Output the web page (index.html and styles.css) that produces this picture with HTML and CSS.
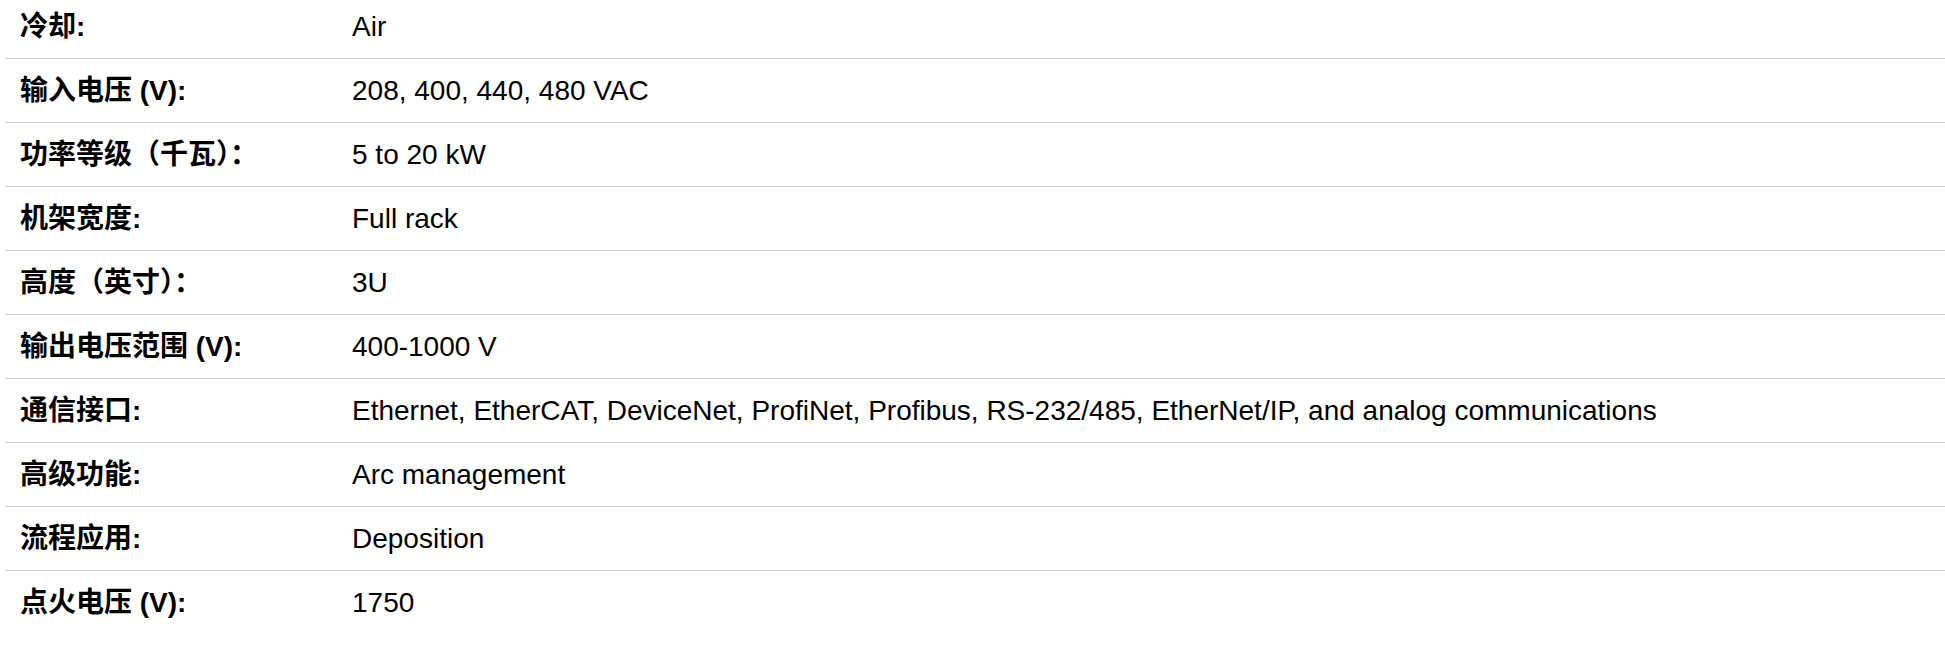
FILE: index.html
```html
<!DOCTYPE html>
<html lang="zh-CN">
<head>
<meta charset="utf-8">
<title>规格</title>
<link rel="stylesheet" href="styles.css">
</head>
<body>
<table class="specs">
  <tbody>
    <tr><th>冷却:</th><td>Air</td></tr>
    <tr><th>输入电压 (V):</th><td>208, 400, 440, 480 VAC</td></tr>
    <tr><th>功率等级（千瓦）：</th><td>5 to 20 kW</td></tr>
    <tr><th>机架宽度:</th><td>Full rack</td></tr>
    <tr><th>高度（英寸）：</th><td>3U</td></tr>
    <tr><th>输出电压范围 (V):</th><td>400-1000 V</td></tr>
    <tr><th>通信接口:</th><td>Ethernet, EtherCAT, DeviceNet, ProfiNet, Profibus, RS-232/485, EtherNet/IP, and analog communications</td></tr>
    <tr><th>高级功能:</th><td>Arc management</td></tr>
    <tr><th>流程应用:</th><td>Deposition</td></tr>
    <tr><th>点火电压 (V):</th><td>1750</td></tr>
  </tbody>
</table>
</body>
</html>
```

FILE: styles.css
```css
html, body {
  margin: 0;
  padding: 0;
  background: #ffffff;
}

body {
  font-family: "Liberation Sans", Arial, "Noto Sans CJK SC", sans-serif;
  color: #000000;
  overflow: hidden;
}

.specs {
  margin-left: 5px;
  width: 1940px;
  border-collapse: collapse;
  font-size: 28px;
  line-height: 33px;
}

.specs th,
.specs td {
  padding: 15px 15px;
  text-align: left;
  vertical-align: top;
  border-bottom: 1px solid #c9d4e2;
  white-space: nowrap;
}

.specs th {
  width: 302px;
  font-weight: 700;
}

.specs td {
  font-weight: 400;
}

.specs tr:first-child th,
.specs tr:first-child td {
  padding-top: 10px;
}

.specs tr:last-child th,
.specs tr:last-child td {
  border-bottom: none;
}
```
